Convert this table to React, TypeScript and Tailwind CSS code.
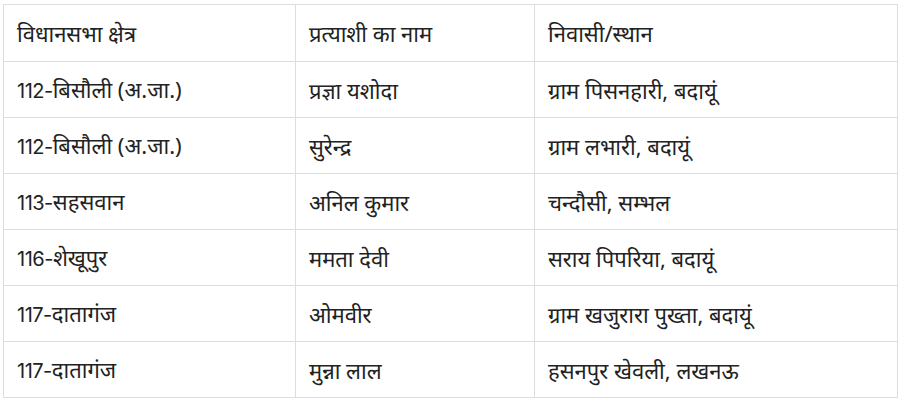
import React from 'react'

const rows = [
    ['112-', 'बिसौली (अ.जा.)', 'प्रज्ञा यशोदा', 'ग्राम पिसनहारी, बदायूं'],
    ['112-', 'बिसौली (अ.जा.)', 'सुरेन्द्र', 'ग्राम लभारी, बदायूं'],
    ['113-', 'सहसवान', 'अनिल कुमार', 'चन्दौसी, सम्भल'],
    ['116-', 'शेखूपुर', 'ममता देवी', 'सराय पिपरिया, बदायूं'],
    ['117-', 'दातागंज', 'ओमवीर', 'ग्राम खजुरारा पुख्ता, बदायूं'],
    ['117-', 'दातागंज', 'मुन्ना लाल', 'हसनपुर खेवली, लखनऊ'],
]

const cell = 'border border-[#ddd] px-[13px] text-left font-normal align-middle'

const App = () => {
    return (
        <div className="pl-[3px] pt-[4px] bg-white w-[902px] h-[401px]" style={{ fontFamily: '"Noto Sans", sans-serif' }}>
            <table className="w-[894px] border-collapse text-[22px] leading-[28px] text-[#222] table-fixed">
                <colgroup>
                    <col className="w-[292px]" />
                    <col className="w-[239px]" />
                    <col className="w-[363px]" />
                </colgroup>
                <thead>
                    <tr className="h-[57px]">
                        <th className={cell}>विधानसभा क्षेत्र</th>
                        <th className={cell}>प्रत्याशी का नाम</th>
                        <th className={cell}>निवासी/स्थान</th>
                    </tr>
                </thead>
                <tbody>
                    {rows.map((r, i) => (
                        <tr key={i} className="h-[56px]">
                            <td className={cell}>
                                <span className="text-[20px] font-['Inter'] proportional-nums tracking-[-0.5px]">{r[0]}</span>
                                {r[1]}
                            </td>
                            <td className={cell}>{r[2]}</td>
                            <td className={cell}>{r[3]}</td>
                        </tr>
                    ))}
                </tbody>
            </table>
        </div>
    )
}

export default App
